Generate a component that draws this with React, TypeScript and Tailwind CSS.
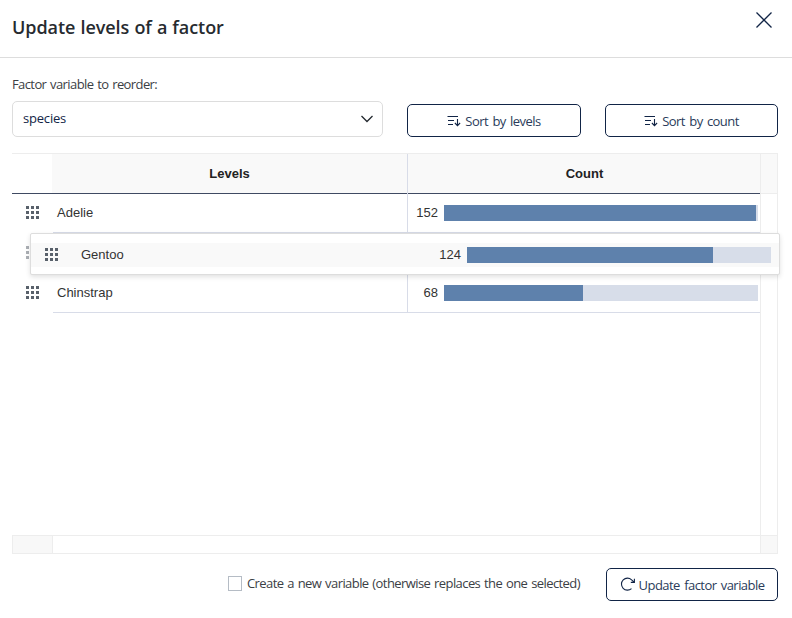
import React from "react";

const ui = "font-['Open_Sans','Noto_Sans',sans-serif]";

function Grip({ className = "" }: { className?: string }) {
  return (
    <svg className={className} width="13" height="13" viewBox="0 0 13 13" fill="#59616b" shapeRendering="crispEdges">
      {[0, 5, 10].map((y) => [0, 5, 10].map((x) => <rect key={`${x}-${y}`} x={x} y={y} width="3" height="3" />))}
    </svg>
  );
}

function SortIcon() {
  return (
    <svg className="shrink-0" width="14" height="12" viewBox="0 0 14 12" fill="none" stroke="#112446" strokeWidth="1.1">
      <path d="M.5 1.5H11M1 5.5H7M1 9.5H6M10.5 4V10.5M7.9 8L10.5 10.6L13.1 8" />
    </svg>
  );
}

function Bar({ value, filled, total }: { value: number; filled: number; total: number }) {
  return (
    <div className="flex items-center">
      <span className="w-[30px] text-right">{value}</span>
      <div className="ml-[6px] h-4 bg-[#d7dde9]" style={{ width: total }}>
        <div className="h-4 bg-[#5e81ac]" style={{ width: filled }} />
      </div>
    </div>
  );
}

function Row({ label, value, filled }: { label: string; value: number; filled: number }) {
  return (
    <div className="flex h-10">
      <div className="w-10 shrink-0 pt-[13px] pl-[14px]"><Grip /></div>
      <div className="ml-px flex w-[355px] shrink-0 items-center border-r border-b border-[#d8dce8] pl-1">{label}</div>
      <div className="flex w-[352px] items-center border-b border-[#d8dce8]"><Bar value={value} filled={filled} total={314} /></div>
    </div>
  );
}

const button = "flex h-[33px] items-center justify-center rounded-[5px] border border-[#112446] bg-white text-[13px] tracking-[-0.55px] [word-spacing:1.5px] text-[#2a3b5a]";

export default function App() {
  return (
    <div className={`h-[618px] w-[792px] overflow-hidden bg-white text-[13px] text-[#3b4045] ${ui}`}>
      <header className="flex h-[58px] items-start justify-between border-b border-[#dddddd] pr-[20px] pl-3">
        <h1 className="mt-[14px] text-[18px] leading-[26px] font-semibold whitespace-nowrap tracking-[-0.06px] [word-spacing:0.5px] text-[#272b30]">Update levels of a factor</h1>
        <svg className="mt-3" width="16" height="16" viewBox="0 0 16 16" fill="none" stroke="#112446" strokeWidth="1.3"><path d="M.5 .5L15.5 15.5M15.5 .5L.5 15.5" /></svg>
      </header>
      <div className="flex h-[95px] pl-3">
        <div className="w-[371px]">
          <div className="mt-[17px] h-[19px] leading-[19px] whitespace-nowrap tracking-[-0.6px] [word-spacing:1px]">Factor variable to reorder:</div>
          <div className="mt-[7px] flex h-9 items-center justify-between rounded-[5px] border border-[#dddddd] pr-[9px] pl-[10px] text-[#112446]">
            <span className="tracking-[-0.2px]">species</span>
            <svg width="12" height="8" viewBox="0 0 12 8" fill="none" stroke="#23292f" strokeWidth="1.3"><path d="M.5 1L6 6.5L11.5 1" /></svg>
          </div>
        </div>
        <button className={`${button} mt-[46px] ml-6 w-[174px]`}><SortIcon /><span className="mt-[2px] ml-1">Sort by levels</span></button>
        <button className={`${button} mt-[46px] ml-6 w-[173px]`}><SortIcon /><span className="mt-[2px] ml-1">Sort by count</span></button>
      </div>
      <main className="relative ml-3 h-[401px] w-[766px] font-['Liberation_Sans',Arial,sans-serif] text-[13px] text-[#333333]">
        <div className="flex h-[382px]">
          <div className="w-[748px] shrink-0">
            <div className="flex h-[41px] border-t border-b border-t-[#ededed] border-b-[#3f4a62] text-[#222222]">
              <div className="w-10 shrink-0" />
              <div className="flex w-[356px] shrink-0 items-center justify-center border-r border-[#d8dce8] bg-[#f9f9f9] font-bold">Levels</div>
              <div className="flex grow items-center justify-center bg-[#f9f9f9] pl-px font-bold">Count</div>
            </div>
            <div className="-mt-px">
              <Row label="Adelie" value={152} filled={312} />
              <div className="h-10 pt-[13px] pl-[14px]"><Grip className="opacity-50" /></div>
              <Row label="Chinstrap" value={68} filled={139} />
            </div>
          </div>
          <div className="w-[18px] border-x border-[#ededed]"><div className="h-[41px] border-y border-[#ededed] bg-[#f9f9f9]" /></div>
        </div>
        <div className="flex h-[19px] border border-[#ededed]">
          <div className="w-10 border-r border-[#ededed] bg-[#f8f8f8]" />
          <div className="grow" />
          <div className="w-[17px] border-l border-[#ededed] bg-[#f8f8f8]" />
        </div>
        <div className="absolute top-[80px] left-[18px] h-[42px] w-[750px] rounded-[2px] border border-[#dddddd] bg-white pt-[9px] shadow-[0_2px_5px_rgba(0,0,0,0.12)]">
          <div className="flex h-6 w-full items-center bg-[#f9f9f9]">
            <Grip className="-mt-px ml-[14px]" />
            <span className="ml-[23px] w-[319px]">Gentoo</span>
            <div className="ml-[31px]"><Bar value={124} filled={246} total={304} /></div>
          </div>
        </div>
      </main>
      <footer className="flex justify-end pt-[14px] pr-[14px]">
        <label className="mt-[5px] flex h-[21px] items-center">
          <span className="mr-[5px] h-[15px] w-[14px] border border-[#b5bcc5]" />
          <span className="w-[333px] whitespace-nowrap tracking-[-0.58px] [word-spacing:1px]">Create a new variable (otherwise replaces the one selected)</span>
        </label>
        <button className={`${button} ml-[26px] w-[172px] shrink-0`}>
          <svg className="mr-1 shrink-0" width="15" height="15" viewBox="0 0 15 15" fill="none" stroke="#112446" strokeWidth="1.1"><path d="M14.4 1.8V5.4H10.8M14.4 5.4L11.6 2.8A6 6 0 1 0 11.5 11.6" /></svg>
          <span className="mt-[2px] whitespace-nowrap">Update factor variable</span>
        </button>
      </footer>
    </div>
  );
}
